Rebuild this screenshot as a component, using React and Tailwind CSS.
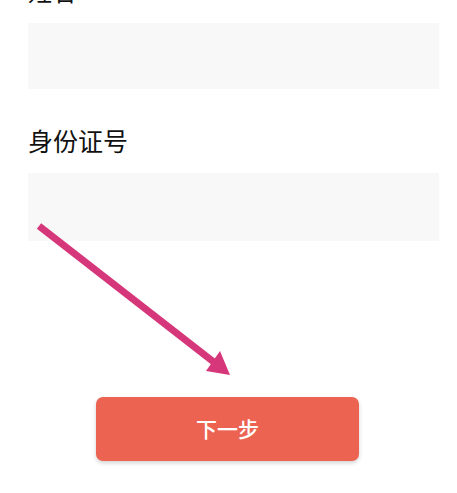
export default function App() {
  return (
    <div
      className="relative w-[457px] h-[493px] overflow-hidden bg-white"
      style={{ fontFamily: '"Noto Sans CJK SC", "Noto Sans", sans-serif' }}
    >
      <div className="flex flex-col pl-[28px] pr-[18px]">
        <div className="-mt-[21px] h-[24px] text-[24px] leading-[24px] text-[#111111]">姓名</div>
        <div className="mt-[20px] h-[66px] bg-[#f8f8f8]" />
        <div className="mt-[39px] h-[24px] text-[25px] leading-[24px] text-[#111111]">身份证号</div>
        <div className="mt-[21px] h-[68px] bg-[#f8f8f8]" />
      </div>
      <div className="mt-[156px] flex justify-center pr-[2px]">
        <button className="flex h-[64px] w-[263px] items-center justify-center rounded-[7px] bg-[#ec6352] text-[21px] font-medium text-white shadow-[0_2px_4px_rgba(0,0,0,0.18)]">
          下一步
        </button>
      </div>
      <svg className="absolute left-0 top-0" width="457" height="493" viewBox="0 0 457 493">
        <line x1="39" y1="226" x2="215" y2="363" stroke="#d6367a" strokeWidth="7" />
        <polygon points="230,375 220,351 206,371" fill="#d6367a" />
      </svg>
    </div>
  );
}
